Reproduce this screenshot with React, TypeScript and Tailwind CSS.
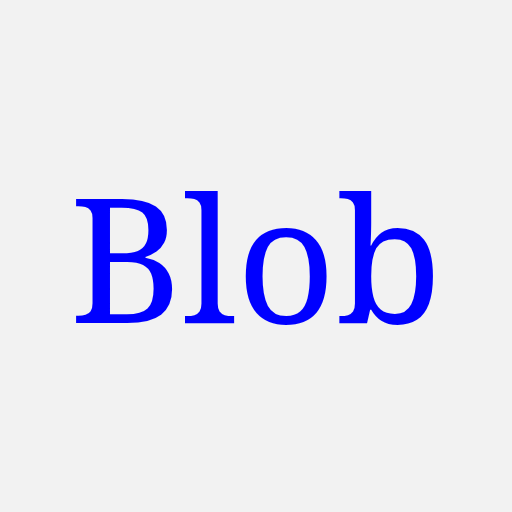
export default function App() {
  return (
    <div className="flex h-[512px] w-[512px] items-center justify-center bg-[#f2f2f2]">
      <span className="text-[173px] leading-none text-[#0000ff] [font-family:'Noto_Serif','DejaVu_Serif',serif]">
        Blob
      </span>
    </div>
  );
}
